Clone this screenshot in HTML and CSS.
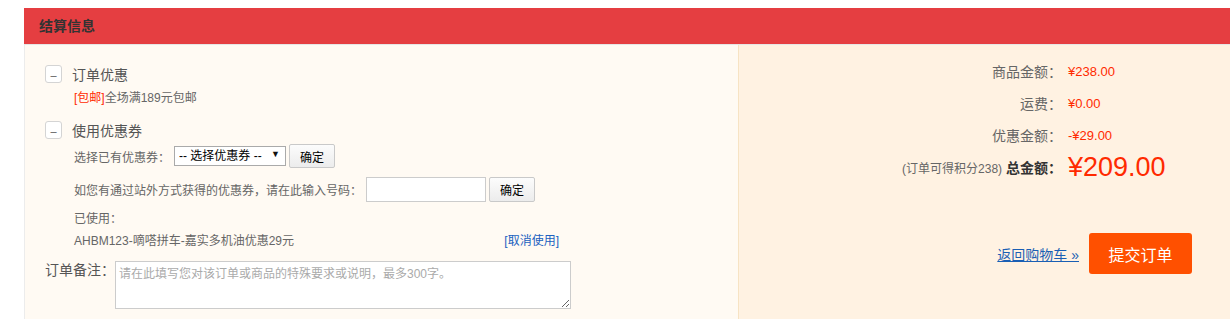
FILE: index.html
```html
<!DOCTYPE html>
<html lang="zh-CN">

<head>
    <meta charset="UTF-8">
    <meta name="viewport" content="width=device-width, initial-scale=1.0">
    <title>结算信息</title>
    <link rel="stylesheet" href="styles.css">
</head>

<body>

    <div class="checkout">
        <div class="checkout-title">结算信息</div>

        <div class="checkout-body">

            <div class="left">
                <div class="sec-head">
                    <span class="fold">&ndash;</span>
                    <span>订单优惠</span>
                </div>
                <div class="sub line"><span class="red">[包邮]</span>全场满189元包邮</div>

                <div class="sec-head second">
                    <span class="fold">&ndash;</span>
                    <span>使用优惠券</span>
                </div>
                <div class="sub">
                    <div class="row pick">
                        <span>选择已有优惠券：</span>
                        <span class="select-wrap">
                            <select class="coupon-select">
                                <option>-- 选择优惠券 --</option>
                            </select>
                        </span>
                        <button class="btn">确定</button>
                    </div>
                    <div class="row code">
                        <span>如您有通过站外方式获得的优惠券，请在此输入号码：</span>
                        <input type="text" class="code-input">
                        <button class="btn tall">确定</button>
                    </div>
                    <div class="line used-title">已使用：</div>
                    <div class="line used">
                        <span>AHBM123-嘀嗒拼车-嘉实多机油优惠29元</span>
                        <a href="#" class="cancel">[取消使用]</a>
                    </div>
                </div>

                <div class="remark">
                    <span class="remark-label">订单备注：</span>
                    <textarea placeholder="请在此填写您对该订单或商品的特殊要求或说明，最多300字。"></textarea>
                </div>
            </div>

            <div class="right">
                <div class="sum">
                    <span class="label">商品金额：</span><span class="val">¥238.00</span>
                    <span class="label">运费：</span><span class="val">¥0.00</span>
                    <span class="label">优惠金额：</span><span class="val">-¥29.00</span>
                    <span class="label total-label"><small>(订单可得积分238)</small> <b>总金额：</b></span><span class="val total">¥209.00</span>
                </div>
                <div class="actions">
                    <a href="#" class="back">返回购物车 »</a>
                    <button class="submit">提交订单</button>
                </div>
            </div>

        </div>
    </div>

</body>

</html>
```

FILE: styles.css
```css
:root {
    --red: #e53e41;
    --price: #ff2a00;
    --text: #666;
}

html {
    overflow: hidden;
}

body {
    margin: 8px 0 8px 8px;
    font-family: "Liberation Sans", "Noto Sans CJK SC", sans-serif;
    font-size: 12px;
    color: var(--text);
}

.checkout {
    margin-left: 16px;
}

.checkout-title {
    height: 36px;
    line-height: 36px;
    background-color: var(--red);
    border-bottom: 1px solid #e6e6e6;
    padding-left: 15px;
    font-size: 14px;
    font-weight: bold;
    color: #333;
}

.checkout-body {
    display: flex;
    height: 300px;
}

.left {
    width: 693px;
    padding: 20px 0 0 20px;
    background-color: #fffaf3;
    border-left: 1px solid #ececec;
}

.right {
    flex: 1;
    padding-top: 10px;
    background-color: #fff2e2;
    border-left: 1px solid #f7e3c3;
}

.sec-head {
    display: flex;
    align-items: center;
    height: 18px;
    font-size: 14px;
    color: #555;
}

.sec-head.second {
    margin-top: 14px;
}

.fold {
    width: 15px;
    height: 16px;
    margin-right: 10px;
    border: 1px solid #d4d4d4;
    border-radius: 3px;
    background-color: #fff;
    display: flex;
    justify-content: center;
    align-items: flex-end;
    line-height: 14px;
    font-size: 11px;
    color: #555;
}

.sub {
    margin-left: 29px;
}

.line {
    line-height: 18px;
}

.sub.line {
    margin-top: 6px;
}

.red {
    color: #ff2a00;
}

.row {
    display: flex;
    align-items: center;
}

.pick {
    margin-top: 5px;
    height: 24px;
}

.code {
    margin-top: 9px;
    height: 25px;
}

.select-wrap {
    position: relative;
    margin-left: 4px;
}

.select-wrap::after {
    content: "▼";
    position: absolute;
    right: 6px;
    top: 3px;
    font-size: 9px;
    color: #111;
    pointer-events: none;
}

.coupon-select {
    -webkit-appearance: none;
    appearance: none;
    display: block;
    width: 112px;
    height: 20px;
    border: 1px solid #aaa;
    border-radius: 0;
    background-color: #fff;
    font-family: inherit;
    font-size: 12px;
    color: #000;
    padding: 0 4px;
}

.btn {
    width: 46px;
    height: 24px;
    margin-left: 3px;
    border: 1px solid #c9c9c9;
    border-radius: 2px;
    background: linear-gradient(#fcfcfc, #ececec);
    font-family: inherit;
    font-size: 12px;
    color: #000;
    padding: 0;
}

.btn.tall {
    height: 25px;
}

.code-input {
    width: 120px;
    height: 25px;
    margin-left: 4px;
    box-sizing: border-box;
    border: 1px solid #ccc;
    background-color: #fff;
}

.used-title {
    margin-top: 8px;
}

.used {
    margin-top: 4px;
    width: 485px;
    display: flex;
    justify-content: space-between;
}

.cancel {
    color: #2061c0;
    text-decoration: none;
}

.remark {
    display: flex;
    align-items: flex-start;
    margin-top: 11px;
}

.remark-label {
    font-size: 14px;
    line-height: 18px;
    color: #555;
}

textarea {
    width: 456px;
    height: 48px;
    box-sizing: border-box;
    border: 1px solid #ccc;
    background-color: #fff;
    font-family: inherit;
    font-size: 12px;
    padding: 2px 3px;
    resize: both;
}

textarea::placeholder {
    color: #aaa;
}

.sum {
    display: grid;
    grid-template-columns: 1fr 130px;
    column-gap: 6px;
    grid-auto-rows: 32px;
    align-items: center;
    padding-right: 32px;
}

.label {
    text-align: right;
    font-size: 14px;
}

.val {
    font-size: 13px;
    color: var(--price);
}

.total-label small {
    font-size: 12px;
}

.total-label b {
    font-size: 14px;
    color: #333;
}

.val.total {
    font-size: 27px;
    height: 36px;
    line-height: 36px;
}

.actions {
    display: flex;
    justify-content: flex-end;
    align-items: center;
    margin-top: 50px;
    padding-right: 38px;
}

.back {
    font-size: 14px;
    color: #1a5fb4;
    margin-right: 10px;
}

.submit {
    width: 103px;
    height: 41px;
    border: none;
    border-radius: 3px;
    background-color: #ff5000;
    color: #fff;
    font-family: inherit;
    font-size: 16px;
}
```
